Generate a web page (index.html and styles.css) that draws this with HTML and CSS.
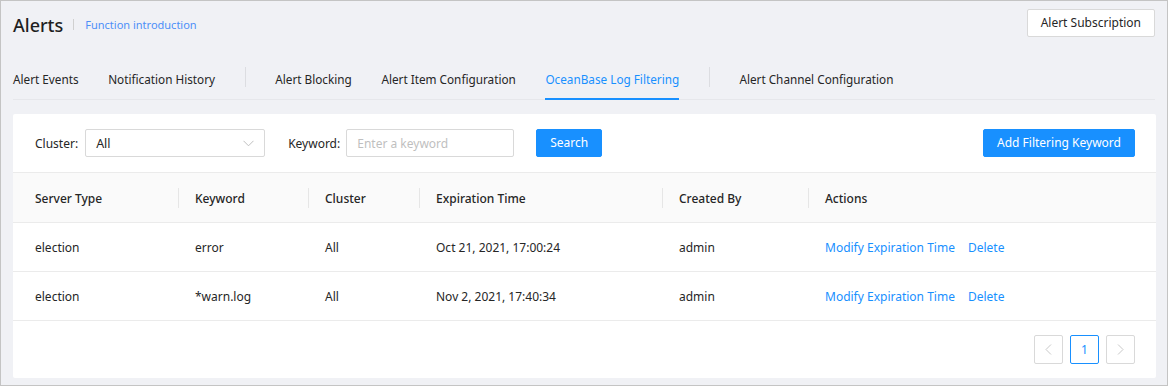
FILE: index.html
```html
<!DOCTYPE html>
<html>
<head>
<meta charset="utf-8">
<link rel="stylesheet" href="styles.css">
</head>
<body>
<div class="page">
  <header class="page-header">
    <div class="title-group">
      <h1 class="title">Alerts</h1>
      <span class="title-divider"></span>
      <a class="intro-link">Function introduction</a>
    </div>
    <button class="btn btn-default">Alert Subscription</button>
  </header>

  <nav class="tabs">
    <span class="tab">Alert Events</span>
    <span class="tab">Notification History</span>
    <span class="tab-divider"></span>
    <span class="tab">Alert Blocking</span>
    <span class="tab">Alert Item Configuration</span>
    <span class="tab tab-active">OceanBase Log Filtering</span>
    <span class="tab-divider"></span>
    <span class="tab">Alert Channel Configuration</span>
  </nav>

  <section class="card">
    <div class="filter-bar">
      <div class="filters">
        <label class="field-label">Cluster:</label>
        <div class="select">
          <span>All</span>
          <svg class="chevron" width="11" height="7" viewBox="0 0 11 7"><path d="M0.5 0.8 L5.5 5.8 L10.5 0.8" fill="none" stroke="#bfbfbf" stroke-width="1"/></svg>
        </div>
        <label class="field-label keyword-label">Keyword:</label>
        <div class="input"><span class="placeholder">Enter a keyword</span></div>
        <button class="btn btn-primary search-btn">Search</button>
      </div>
      <button class="btn btn-primary add-btn">Add Filtering Keyword</button>
    </div>

    <table class="table">
      <colgroup>
        <col class="c1"><col class="c2"><col class="c3"><col class="c4"><col class="c5"><col>
      </colgroup>
      <thead>
        <tr>
          <th>Server Type</th>
          <th>Keyword</th>
          <th>Cluster</th>
          <th>Expiration Time</th>
          <th>Created By</th>
          <th class="last">Actions</th>
        </tr>
      </thead>
      <tbody>
        <tr>
          <td>election</td>
          <td>error</td>
          <td>All</td>
          <td>Oct 21, 2021, 17:00:24</td>
          <td>admin</td>
          <td><a class="action">Modify Expiration Time</a><a class="action">Delete</a></td>
        </tr>
        <tr>
          <td>election</td>
          <td>*warn.log</td>
          <td>All</td>
          <td>Nov 2, 2021, 17:40:34</td>
          <td>admin</td>
          <td><a class="action">Modify Expiration Time</a><a class="action">Delete</a></td>
        </tr>
      </tbody>
    </table>

    <div class="pagination">
      <span class="page-item disabled">
        <svg width="7" height="11" viewBox="0 0 7 11"><path d="M6 0.5 L1 5.5 L6 10.5" fill="none" stroke="#c8c8c8" stroke-width="1"/></svg>
      </span>
      <span class="page-item active">1</span>
      <span class="page-item disabled">
        <svg width="7" height="11" viewBox="0 0 7 11"><path d="M1 0.5 L6 5.5 L1 10.5" fill="none" stroke="#c8c8c8" stroke-width="1"/></svg>
      </span>
    </div>
  </section>
</div>
</body>
</html>
```

FILE: styles.css
```css
* { box-sizing: border-box; }
html, body { margin: 0; padding: 0; }
body {
  font-family: "Noto Sans", "Open Sans", sans-serif;
  font-size: 12px;
  color: #262626;
  background: #f0f1f5;
}
.page {
  width: 1168px;
  height: 386px;
  border: 1px solid #c4c4c4;
  background: #f0f1f5;
  padding: 8px 11px 8px 12px;
  display: flex;
  flex-direction: column;
}
.page-header {
  display: flex;
  justify-content: space-between;
  align-items: center;
  height: 28px;
}
.title-group { display: flex; align-items: center; padding-top: 3px; }
.title {
  margin: 0;
  font-size: 18px;
  font-weight: 500;
  color: #1f1f1f;
  line-height: 28px;
}
.title-divider {
  width: 1px;
  height: 11px;
  background: #d0d0d0;
  margin: 0 11px 0 10px;
}
.intro-link {
  color: #4d8ff8;
  font-size: 11px;
}
.btn {
  font-family: inherit;
  font-size: 12px;
  height: 28px;
  border-radius: 2px;
  padding: 0 13px;
  cursor: pointer;
  line-height: 26px;
}
.page-header .btn { margin-right: 1px; }
.btn-default {
  background: #fff;
  border: 1px solid #d9d9d9;
  color: #262626;
}
.btn-primary {
  background: #1890ff;
  border: 1px solid #1890ff;
  color: #fff;
}
.tabs {
  margin-top: 32px;
  display: flex;
  gap: 29.6px;
  border-bottom: 1px solid #e6e7eb;
  font-size: 11.75px;
  margin-right: 1px;
}
.tab {
  line-height: 20px;
  padding-bottom: 9px;
  margin-bottom: -1px;
  border-bottom: 2px solid transparent;
  color: #262626;
  white-space: nowrap;
}
.tab-active {
  color: #1890ff;
  border-bottom-color: #1890ff;
}
.tab-divider {
  width: 1px;
  height: 20px;
  background: #dcdde1;
  margin-top: -2px;
}
.card {
  margin-top: 14px;
  background: #fff;
  border-radius: 2px;
  flex: 1;
}
.filter-bar {
  display: flex;
  justify-content: space-between;
  align-items: center;
  padding: 15px 21px 15px 22px;
}
.filters { display: flex; align-items: center; }
.field-label { color: #262626; margin-right: 7px; }
.select {
  width: 180px;
  height: 28px;
  border: 1px solid #d9d9d9;
  border-radius: 2px;
  display: flex;
  align-items: center;
  justify-content: space-between;
  padding: 0 10px 0 10px;
  font-size: 12.5px;
}
.keyword-label { margin-left: 23px; margin-right: 6px; }
.input {
  width: 168px;
  height: 28px;
  border: 1px solid #d9d9d9;
  border-radius: 2px;
  display: flex;
  align-items: center;
  padding: 0 10px;
}
.placeholder { color: #bfbfbf; }
.search-btn { margin-left: 22px; width: 66px; padding: 0; }
.add-btn { width: 152px; padding: 0; }
.table {
  width: 100%;
  border-collapse: collapse;
  table-layout: fixed;
}
col.c1 { width: 166px; }
col.c2 { width: 130px; }
col.c3 { width: 111px; }
col.c4 { width: 243px; }
col.c5 { width: 146px; }
.table th {
  position: relative;
  background: #fafafa;
  font-weight: 500;
  text-align: left;
  height: 50px;
  padding: 0 16px;
  padding-top: 2px;
  border-top: 1px solid #ebebeb;
  border-bottom: 1px solid #ebebeb;
  color: #262626;
}
.table th:not(.last)::after {
  content: "";
  position: absolute;
  right: 0;
  top: 15px;
  width: 1px;
  height: 20px;
  background: #e6e6e6;
}
.table td {
  height: 49px;
  padding: 0 16px;
  border-bottom: 1px solid #ebebeb;
  white-space: nowrap;
}
.table th:first-child, .table td:first-child { padding-left: 22px; }
.action { color: #1890ff; margin-right: 13px; }
.pagination {
  display: flex;
  justify-content: flex-end;
  gap: 7px;
  padding: 14px 21px 14px 0;
}
.page-item {
  width: 29px;
  height: 29px;
  border: 1px solid #d9d9d9;
  border-radius: 2px;
  display: flex;
  align-items: center;
  justify-content: center;
  color: #262626;
}
.page-item.active {
  border-color: #1890ff;
  color: #1890ff;
}
```
